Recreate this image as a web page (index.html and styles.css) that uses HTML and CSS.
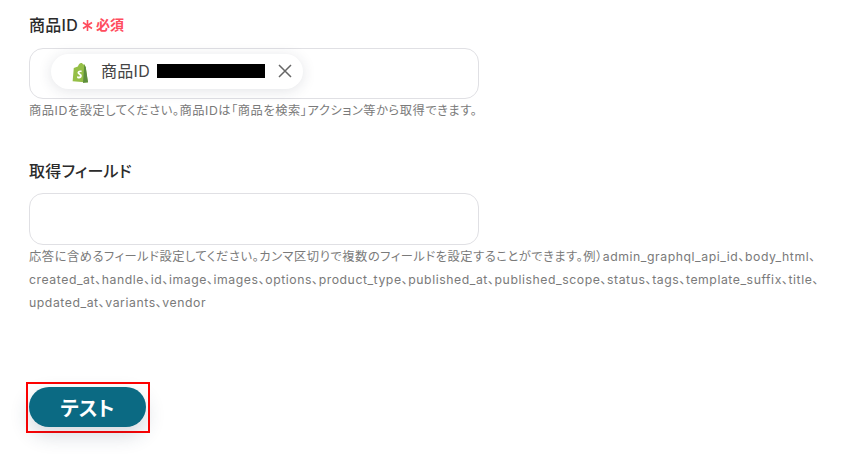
FILE: index.html
```html
<!DOCTYPE html>
<html lang="ja">
<head>
<meta charset="utf-8">
<title>商品ID</title>
<link rel="stylesheet" href="styles.css">
</head>
<body>
<main class="form">
  <section class="field field-first">
    <div class="label-row">
      <span class="label">商品ID</span>
      <svg class="req-mark" width="11" height="11" viewBox="0 0 11 11">
        <path d="M5.500 0V11M1 2.500 10 8.500M10 2.500 1 8.500" stroke="#ff4d5e" stroke-width="1.600" fill="none"/>
      </svg>
      <span class="req-text">必須</span>
    </div>
    <div class="box box-id">
      <div class="chip">
        <svg class="shop" width="19" height="21" viewBox="0 0 18 20">
          <path d="M2.600 5.600 6.500 4.400C7 2.400 8.300 1 9.700 1c.9 0 1.500.6 1.800 1.400l1.100-.2L14 5l2 14.500-14.500-1.200Z" fill="#95bf47"/>
          <path d="M12.600 2.200 14 5l2.200 14.300-4.800.7Z" fill="#5e8e3e"/>
          <path d="M10.300 8.300c-.5-.2-1-.3-1.500-.3-1.700 0-2.700 1-2.700 2.200 0 1.700 2.400 1.900 2.400 3 0 .5-.4.800-.9.800-.8 0-1.500-.6-1.500-.6l-.4 1.500s.8.800 2 .8c1.500 0 2.600-1 2.600-2.500 0-1.900-2.400-2.200-2.400-3.100 0-.3.200-.6.900-.6.500 0 1 .2 1 .2Z" fill="#fff"/>
        </svg>
        <span class="chip-text">商品ID</span>
        <span class="redact"></span>
        <svg class="close" width="14" height="14" viewBox="0 0 14 14">
          <path d="M1 1 13 13M13 1 1 13" stroke="#666" stroke-width="1.500" fill="none"/>
        </svg>
      </div>
    </div>
    <p class="help">商品IDを設定してください。商品IDは「商品を検索」アクション等から取得できます。</p>
  </section>
  <section class="field field-second">
    <div class="label-row">
      <span class="label">取得フィールド</span>
    </div>
    <div class="box box-fields"></div>
    <p class="help help-long">応答に含めるフィールド設定してください。カンマ区切りで複数のフィールドを設定することができます。例）admin_graphql_api_id、body_html、created_at、handle、id、image、images、options、product_type、published_at、published_scope、status、tags、template_suffix、title、updated_at、variants、vendor</p>
  </section>
  <div class="action">
    <button class="test" type="button">テスト</button>
  </div>
</main>
</body>
</html>
```
FILE: styles.css
```css
* { box-sizing: border-box; }
html, body { margin: 0; padding: 0; background: #fff; }
body {
  width: 857px;
  height: 455px;
  overflow: hidden;
  font-family: Inter, "Noto Sans CJK JP", sans-serif;
  font-feature-settings: "palt";
  color: #333;
}
.form { padding: 13px 0 0 29px; display: flex; flex-direction: column; }
.label-row { display: flex; align-items: center; height: 22px; }
.label { font-size: 16px; font-weight: 500; letter-spacing: .3px; color: #2b2b2b; }
.req-mark { margin: 3px 0 0 4px; flex: none; }
.req-text { font-size: 14px; font-weight: 700; color: #ff4d5e; margin-left: 3px; }
.box { width: 450px; border: 1px solid #e0e0e4; border-radius: 14px; background: #fff; }
.box-id { height: 51px; margin-top: 13px; padding: 5px 0 0 21px; }
.box-fields { height: 52px; margin-top: 12px; }
.chip {
  width: 252px;
  height: 35px;
  border-radius: 18px;
  background: #fff;
  box-shadow: 0 2px 14px rgba(40, 50, 70, .13);
  display: flex;
  align-items: center;
  padding-left: 20px;
}
.shop { flex: none; margin-top: 1px; }
.chip-text { font-size: 16px; letter-spacing: .3px; color: #444; margin: 0 0 4px 11px; }
.redact { width: 108px; height: 14px; background: #000; margin: 0 0 1px 7px; }
.close { margin: 0 0 1px 13px; flex: none; }
.help { margin: 0; font-size: 12.250px; letter-spacing: .55px; color: #7a7a7a; line-height: 24px; }
.field-second { margin-top: 36px; }
.help-long { width: 800px; line-height: 23px; }
.action {
  margin: 68px 0 0 -3px;
  width: 124px;
  height: 51px;
  border: 2px solid #f00;
  padding: 3px 0 0 1px;
}
.test {
  display: block;
  width: 117px;
  height: 40px;
  border: 0;
  border-radius: 20px;
  background: #0b6a83;
  color: #fff;
  font: inherit;
  font-size: 20px;
  font-weight: 700;
  box-shadow: 0 8px 20px rgba(40, 60, 90, .2);
}
```
